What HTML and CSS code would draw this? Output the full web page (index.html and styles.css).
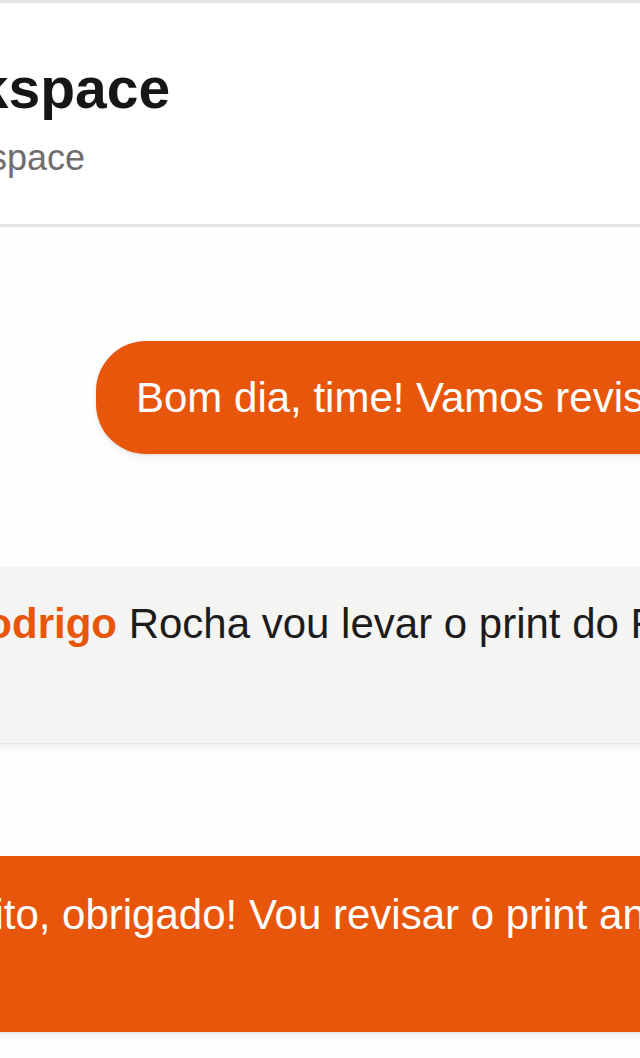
FILE: index.html
```html
<!DOCTYPE html>
<html lang="pt-BR">
<head>
<meta charset="utf-8">
<title>Workspace</title>
<link rel="stylesheet" href="styles.css">
</head>
<body>
<div class="app">
  <header class="header">
    <h1 class="title">Workspace</h1>
    <p class="subtitle">Seu workspace</p>
  </header>
  <main class="chat">
    <div class="msg msg-out msg-pill">Bom dia, time! Vamos revisar o fluxo de onboarding hoje?</div>
    <div class="msg msg-in"><span class="author">Rodrigo</span> Rocha vou levar o print do Figma para a reunião.</div>
    <div class="msg msg-out msg-block">Perfeito, obrigado! Vou revisar o print antes da reunião.</div>
  </main>
</div>
</body>
</html>
```
FILE: styles.css
```css
html, body {
  margin: 0;
  padding: 0;
}
body {
  background: #fefefe;
  font-family: "Liberation Sans", Arial, sans-serif;
  overflow: hidden;
  width: 640px;
  height: 1058px;
}
.app {
  display: flex;
  flex-direction: column;
  width: 640px;
}
.header {
  background: #ffffff;
  border-top: 3px solid #e5e3e3;
  border-bottom: 3px solid #e3e3e3;
  padding: 53px 0 45px 0;
  display: flex;
  flex-direction: column;
  gap: 16px;
}
.title {
  margin: 0 0 0 -133px;
  font-size: 57px;
  line-height: 64px;
  font-weight: 700;
  color: #161616;
  white-space: nowrap;
}
.subtitle {
  margin: 0 0 0 -161px;
  font-size: 36px;
  line-height: 43px;
  color: #6e6e6e;
  white-space: nowrap;
}
.chat {
  display: flex;
  flex-direction: column;
  align-items: flex-start;
  gap: 113px;
  padding-top: 114px;
}
.msg {
  white-space: nowrap;
  font-size: 42px;
  line-height: 49px;
  box-shadow: 0 1px 2px rgba(0, 0, 0, 0.08), 0 4px 8px rgba(0, 0, 0, 0.06);
}
.msg-out {
  background: #e8560b;
  color: #ffffff;
}
.msg-pill {
  margin-left: 96px;
  padding: 32px 40px;
  border-radius: 50px;
}
.msg-in {
  background: #f4f4f3;
  color: #1c1c1c;
  margin-left: -84px;
  padding: 32px 40px 95px 40px;
  border-radius: 24px;
}
.author {
  color: #e8560b;
  font-weight: 700;
}
.msg-block {
  margin-left: -146px;
  padding: 34px 40px 93px 40px;
  border-radius: 24px;
}
```
